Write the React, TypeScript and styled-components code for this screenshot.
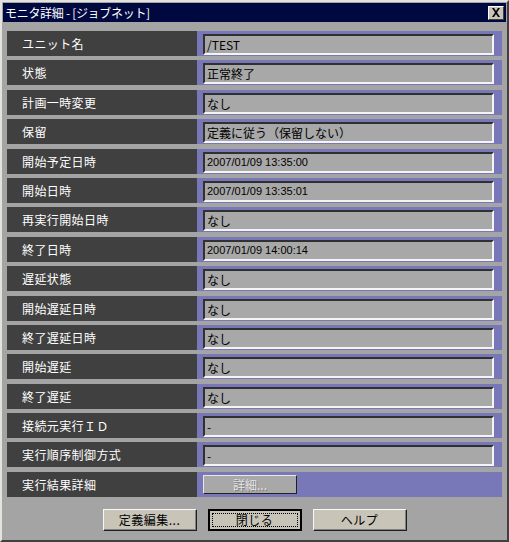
import React from "react";
import styled, { createGlobalStyle } from "styled-components";

const GlobalStyle = createGlobalStyle`
  html, body {
    margin: 0;
    padding: 0;
    background: #a4a4a4;
  }
  * {
    box-sizing: border-box;
  }
`;

const rows: { label: string; value: string; mono?: boolean }[] = [
  { label: "ユニット名", value: "/TEST" },
  { label: "状態", value: "正常終了" },
  { label: "計画一時変更", value: "なし" },
  { label: "保留", value: "定義に従う（保留しない）" },
  { label: "開始予定日時", value: "2007/01/09 13:35:00", mono: true },
  { label: "開始日時", value: "2007/01/09 13:35:01", mono: true },
  { label: "再実行開始日時", value: "なし" },
  { label: "終了日時", value: "2007/01/09 14:00:14", mono: true },
  { label: "遅延状態", value: "なし" },
  { label: "開始遅延日時", value: "なし" },
  { label: "終了遅延日時", value: "なし" },
  { label: "開始遅延", value: "なし" },
  { label: "終了遅延", value: "なし" },
  { label: "接続元実行ＩＤ", value: "-" },
  { label: "実行順序制御方式", value: "-" },
];

function App() {
  return (
    <>
      <GlobalStyle />
      <Window>
        <TitleBar>
          <span>モニタ詳細 - [ジョブネット]</span>
          <CloseButton>
            <svg width="10" height="9" viewBox="0 0 10 9">
              <path d="M1 0h2l2 3 2-3h2L6 4.5 9 9H7L5 6 3 9H1l3-4.5z" fill="#000" />
            </svg>
          </CloseButton>
        </TitleBar>
        <Body>
          <List>
            {rows.map((r) => (
              <Row key={r.label}>
                <Label>{r.label}</Label>
                <ValueCell>
                  <Field $narrow={r.mono}>{r.value}</Field>
                </ValueCell>
              </Row>
            ))}
            <Row>
              <Label>実行結果詳細</Label>
              <ValueCell>
                <DetailButton>詳細...</DetailButton>
              </ValueCell>
            </Row>
          </List>
          <Buttons>
            <Button>定義編集...</Button>
            <Button $default>
              <Focus>閉じる</Focus>
            </Button>
            <Button>ヘルプ</Button>
          </Buttons>
        </Body>
      </Window>
    </>
  );
}

const Window = styled.div`
  width: 509px;
  height: 542px;
  background: #a4a4a4;
  border-left: 2px solid #e4e2dc;
  border-top: 2px solid #e4e2dc;
  border-right: 2px solid #404040;
  border-bottom: 2px solid #404040;
  padding: 1px;
  font-family: "Noto Sans CJK JP", "DejaVu Sans", sans-serif;
  display: flex;
  flex-direction: column;
`;

const TitleBar = styled.div`
  height: 19px;
  background: #000840;
  color: #fff;
  font-size: 12px;
  line-height: 19px;
  padding: 0 2px 0 2px;
  display: flex;
  align-items: center;
  justify-content: space-between;
  letter-spacing: -0.3px;
`;

const CloseButton = styled.div`
  width: 16px;
  height: 14px;
  background: #c8c4bc;
  border: 1px solid;
  border-color: #fff #404040 #404040 #fff;
  display: flex;
  align-items: center;
  justify-content: center;
`;

const Body = styled.div`
  padding: 9px 4px 0 4px;
  display: flex;
  flex-direction: column;
`;

const List = styled.div`
  display: flex;
  flex-direction: column;
  gap: 4.4px;
`;

const Row = styled.div`
  height: 25px;
  display: grid;
  grid-template-columns: 190px 305px;
`;

const Label = styled.div`
  background: #404040;
  color: #fff;
  font-size: 12px;
  letter-spacing: 0.4px;
  padding-left: 15px;
  display: flex;
  align-items: center;
`;

const ValueCell = styled.div`
  background: #7878b8;
  padding: 3px 8px 1px 6px;
  display: flex;
  align-items: stretch;
`;

const Field = styled.div<{ $narrow?: boolean }>`
  flex: 1;
  background: #a8a8a8;
  border-top: 2px solid #303030;
  border-left: 2px solid #303030;
  border-bottom: 2px solid #f4f4f4;
  border-right: 2px solid #f4f4f4;
  color: #000;
  font-size: ${(p) => (p.$narrow ? "11px" : "12px")};
  padding-left: 2px;
  display: flex;
  align-items: center;
  white-space: nowrap;
  font-family: ${(p) =>
    p.$narrow
      ? '"Liberation Sans", "Noto Sans CJK JP", sans-serif'
      : '"Noto Sans CJK JP", sans-serif'};
`;

const DetailButton = styled.div`
  width: 94px;
  margin-bottom: 2px;
  background: #a8a8a8;
  border: 1px solid;
  border-color: #e8e8e8 #202020 #202020 #e8e8e8;
  color: #e4e4e4;
  text-shadow: 1px 1px 0 #808080;
  font-size: 12px;
  display: flex;
  align-items: center;
  justify-content: center;
`;

const Buttons = styled.div`
  margin-top: 12px;
  display: flex;
  justify-content: center;
  gap: 11px;
`;

const Button = styled.div<{ $default?: boolean }>`
  width: 94px;
  height: 22px;
  background: #c8c4b8;
  border: ${(p) => (p.$default ? "2px" : "1px")} solid;
  border-color: ${(p) =>
    p.$default ? "#000" : "#f8f8f8 #202020 #202020 #f8f8f8"};
  box-shadow: ${(p) =>
    p.$default ? "none" : "inset -1px -1px 0 #808080"};
  color: #000;
  font-size: 12px;
  letter-spacing: 0.5px;
  display: flex;
  align-items: center;
  justify-content: center;
  padding: ${(p) => (p.$default ? "2px" : "0")};
`;

const Focus = styled.div`
  flex: 1;
  align-self: stretch;
  border: 1px dotted #000;
  display: flex;
  align-items: center;
  justify-content: center;
`;

export default App;
